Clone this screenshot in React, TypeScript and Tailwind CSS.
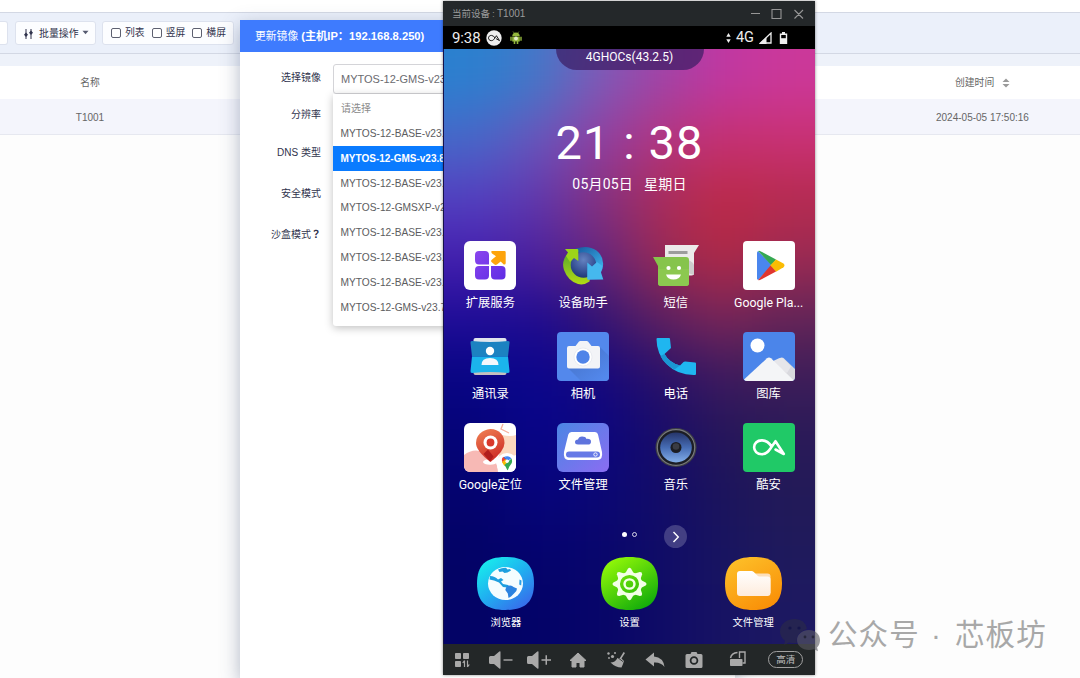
import type { ReactNode } from "react";

const versions = [
  "MYTOS-12-BASE-v23.8.2",
  "MYTOS-12-GMS-v23.8.15",
  "MYTOS-12-BASE-v23.8.1",
  "MYTOS-12-GMSXP-v23.7",
  "MYTOS-12-BASE-v23.7.8",
  "MYTOS-12-BASE-v23.7.5",
  "MYTOS-12-BASE-v23.7.1",
  "MYTOS-12-GMS-v23.7.1",
];

function Checkbox({ label }: { label: string }) {
  return (
    <label className="flex w-[41px] items-center gap-[4px]">
      <span className="size-[10px] rounded-[2px] border border-[#5d6070] bg-white" />
      <span className="text-[9.8px] leading-3 text-[#30334d]">{label}</span>
    </label>
  );
}

function Page() {
  return (
    <div className="flex h-full flex-col bg-[#fdfdfd] text-[#666]">
      <div className="h-[12px] bg-white" />
      <div className="flex h-[42px] items-start border-y border-[#d3d8e4] bg-[#ebf0fa] pt-[8px]">
        <div className="h-[24px] w-[8px] rounded-r-[3px] border border-l-0 border-[#dde2ee] bg-white" />
        <div className="ml-[7px] flex h-[24px] w-[81px] items-center rounded-[3px] border border-[#dde2ee] bg-[#fcfdff] pl-[7px] pt-[1px]">
          <svg width="11" height="12" viewBox="0 0 11 12" fill="#30334d">
            <path d="M2.500 1h1v10h-1zM7.500 1h1v10h-1z" />
            <path d="M3 4.500 5 6.700 3 9 1 6.700zM8 2.500 10 4.700 8 7 6 4.700z" />
          </svg>
          <span className="ml-[5px] text-[9.9px] leading-3 text-[#30334d]">批量操作</span>
          <svg className="ml-[3px] mb-[2px]" width="7" height="5" viewBox="0 0 7 5">
            <path d="M.5.8h6L3.500 4.300z" fill="#555a70" />
          </svg>
        </div>
        <div className="ml-[6px] flex h-[24px] w-[132px] items-center rounded-[3px] border border-[#dde2ee] bg-[#fcfdff] pl-[8px]">
          <Checkbox label="列表" />
          <Checkbox label="竖屏" />
          <Checkbox label="横屏" />
        </div>
      </div>
      <div className="h-[12px] bg-[#eef2fa]" />
      <div className="flex h-[33px] items-center justify-between bg-white text-[9.8px]">
        <span className="w-[180px] pt-px text-center">名称</span>
        <span className="flex w-[125px] items-center pt-px">
          创建时间
          <svg className="ml-[8px]" width="8" height="10" viewBox="0 0 8 10" fill="#9a9a9a">
            <path d="M4 .5 7.500 4H.5zM4 9.500 7.500 6H.5z" />
          </svg>
        </span>
      </div>
      <div className="flex h-[36px] items-center justify-between border-b border-[#e6e8f0] bg-[#f4f5fc] text-[10px]">
        <span className="w-[180px] pt-px text-center">T1001</span>
        <span className="w-[144px] pt-px">2024-05-05 17:50:16</span>
      </div>
    </div>
  );
}

function Dialog() {
  return (
    <div className="absolute left-[240px] top-[20px] flex h-[658px] w-[495px] flex-col bg-white shadow-[0_6px_18px_rgba(70,85,120,0.42)]">
      <div className="flex h-[32px] shrink-0 items-center bg-[#3e7bfe] pl-[15px] pt-px text-[10.8px] text-white">
        更新镜像&nbsp;<b className="text-[11.2px]">(主机IP：192.168.8.250)</b>
      </div>
      <div className="flex">
        <div className="flex w-[81px] flex-col items-end text-[10px] leading-[14px] text-[#30334d]">
          <span className="mt-[19px]">选择镜像</span>
          <span className="mt-[23px]">分辨率</span>
          <span className="mt-[24px]">DNS 类型</span>
          <span className="mt-[27px]">安全模式</span>
          <span className="mt-[26px]">沙盒模式<b className="font-['Noto_Sans_CJK_TC',sans-serif]">？</b></span>
        </div>
        <div className="ml-[12px] mt-[12px] w-[207px]">
          <div className="flex h-[30px] items-center rounded-[3px] border border-[#d4d4d8] pl-[7px] text-[11px] text-[#6b6b70]">
            MYTOS-12-GMS-v23.8.15
          </div>
          <div className="h-[232px] rounded-b-[3px] bg-white pt-[2.5px] text-[10.2px] text-[#5c5c60] shadow-[0_2px_8px_rgba(0,0,0,0.25)]">
            <div className="flex h-[24.8px] items-center pl-[8px] text-[10px] text-[#8a8a8a]">请选择</div>
            {versions.map((v, i) => (
              <div
                key={v}
                className={
                  i === 1
                    ? "flex h-[24.8px] items-center bg-[#0a7bff] pl-[7.5px] text-[10px] font-bold text-white"
                    : "flex h-[24.8px] items-center pl-[7.5px]"
                }
              >
                {v}
              </div>
            ))}
          </div>
        </div>
      </div>
    </div>
  );
}

const TileBox = ({ children }: { children: ReactNode }) => (
  <svg width="52" height="49" viewBox="0 0 52 49">
    {children}
  </svg>
);

const ExtendIcon = () => (
  <TileBox>
    <defs>
      <linearGradient id="ext" x1="0" y1="0" x2="1" y2="1">
        <stop offset="0" stopColor="#8a45ee" />
        <stop offset="1" stopColor="#5f2ce4" />
      </linearGradient>
    </defs>
    <rect width="52" height="49" rx="6" fill="#fff" />
    <path d="M15 10h6q4 0 4 4v9.500H15q-4 0-4-4.500v-5q0-4 4-4zM11 29q0-4 4-4h10v9.500q0 4-4 4h-6q-4 0-4-4zM27 25h10.500q4 0 4 4v5.500q0 4-4 4H31q-4 0-4-4z" fill="url(#ext)" />
    <path d="M28 10h12.500q1.200 0 1.200 1.200V22q0 1.500-1.300 1.500-.7 0-1.200-.6L36.700 20.500 33 23.500q-1.500.8-2.500 0L27.500 21q-.8-1 0-2l4.500-3.800-4-2.800Q26.500 10.300 28 10z" fill="#fda40c" />
  </TileBox>
);

const AssistantIcon = () => (
  <TileBox>
    <defs>
      <radialGradient id="orb" cx=".5" cy=".3" r=".7">
        <stop offset="0" stopColor="#6482c0" />
        <stop offset=".6" stopColor="#3a5599" />
        <stop offset="1" stopColor="#1f3876" />
      </radialGradient>
      <linearGradient id="gr" x1="0" y1="0" x2="0" y2="1">
        <stop offset="0" stopColor="#5aa82c" />
        <stop offset="1" stopColor="#b2dc14" />
      </linearGradient>
      <linearGradient id="bl" x1="0" y1="0" x2=".8" y2="1">
        <stop offset="0" stopColor="#175a9e" />
        <stop offset="1" stopColor="#3db2ec" />
      </linearGradient>
    </defs>
    <path d="M19 7.500Q31 3.500 39.500 9.500 47 15.500 46 24.500q0 4-2.500 7L35 29 22 12z" fill="url(#bl)" />
    <path d="M11 12Q4 20 7 29q4 11 14 14 6 1.500 11.500-2.500L33 37 18 16z" fill="url(#gr)" />
    <circle cx="26.500" cy="24" r="12.800" fill="url(#orb)" />
    <path d="M8 8 20.500 8q.8.300.8 1V20L17 17l-4 4-4-6 2-3.500z" fill="#9cd51a" />
    <path d="M30.300 21.500 35 25.500 40 21l5.500 4-1.500 6.500 2.300 7L31 38.800q-.8-.3-.8-1z" fill="#45b8ee" />
  </TileBox>
);

const SmsIcon = () => (
  <TileBox>
    <path d="M15 4h34l-5 8v20q0 2.500-2.500 2.500H18Q15 34.500 15 32z" fill="#eceaea" />
    <rect x="18.500" y="10" width="19" height="3" fill="#9c9c9c" />
    <path d="M38 19q5 2 6 5v10l-6-2z" fill="#cdcdcd" />
    <path d="M3 16h33q3 0 3 3v23q0 3-3 3H11q-3 0-3-3V25z" fill="#86c44c" />
    <path d="M8 28h31v14q0 3-3 3H11q-3 0-3-3z" fill="#8cc850" />
    <circle cx="18.500" cy="27" r="2.100" fill="#fff" />
    <circle cx="29" cy="27" r="2.100" fill="#fff" />
    <path d="M16 33.500h15q-1.500 5-7.500 5t-7.500-5z" fill="#fff" />
  </TileBox>
);

const PlayIcon = () => (
  <TileBox>
    <rect width="52" height="49" rx="4" fill="#fff" />
    <path d="M14 11.500v26q.3 1 1.200 1.500L29 24.500 15.200 10q-1 .5-1.200 1.500z" fill="#4a86ee" />
    <path d="M15.200 10q1-.5 2.300.2L33 18.500l-4.500 6z" fill="#35a853" />
    <path d="M33 18.500 40.500 22.500q2 1.800 0 3.800L33 30.800 27 24.500z" fill="#fbbc04" />
    <path d="M15.200 39q1 .5 2.300-.2L33 30.500l-5.500-6z" fill="#e0362f" />
  </TileBox>
);

const ContactsIcon = () => (
  <TileBox>
    <rect x="9.500" y="6" width="33" height="6" rx="2" fill="#dfe4ec" />
    <rect x="9.500" y="37" width="33" height="6" rx="2" fill="#c5c0be" />
    <path d="M8 9q18 2 36 0 2 0 1.500 2L44 24.500H8L6.500 11Q6 9 8 9z" fill="#1c82c1" />
    <path d="M8 24.500h36L45.500 39q.2 2-1.500 2-18-2-36 0-1.700 0-1.500-2z" fill="#1bb4ec" />
    <circle cx="26" cy="19" r="4.200" fill="#fff" />
    <path d="M17.500 33q0-7 8.500-7t8.500 7z" fill="#f2f8fc" />
  </TileBox>
);

const CameraIcon = () => (
  <TileBox>
    <defs>
      <linearGradient id="cam" x1="0" y1="0" x2="1" y2="1">
        <stop offset=".2" stopColor="#4776cf" />
        <stop offset=".9" stopColor="#5388ec" />
      </linearGradient>
    </defs>
    <rect width="52" height="49" rx="4" fill="#5388ec" />
    <path d="M11 36 43 15l9 9v21q0 4-4 4H24z" fill="url(#cam)" />
    <path d="M12 14h6.500l3.500-4.500q.5-.5 1.300-.5h6.400q.8 0 1.300.5l3.500 4.500H41q2 0 2 2v18.500q0 2-2 2H12q-2 0-2-2V16q0-2 2-2z" fill="#f3f4f7" />
    <circle cx="26" cy="25" r="9" fill="#fff" stroke="#dfe2ea" strokeWidth=".6" />
    <circle cx="26" cy="25" r="6.700" fill="#4f84e8" />
  </TileBox>
);

const PhoneIcon = () => (
  <TileBox>
    <path d="M7.500 6H19q1 0 1 1l1 9-6.500 6q5 9 15.500 11.500l3.500-3.500q.7-.7 1.700-.6L45 30.500q1 .1 1 1V42q0 1-1 1Q28 43.500 17 32.500 6.500 22 6.500 7q0-1 1-1z" fill="#1fb6f0" />
    <path d="M14.500 22q5 9 15.500 11.500l-5.500 4Q14 32 10.500 24z" fill="#1b96d2" />
  </TileBox>
);

const GalleryIcon = () => (
  <TileBox>
    <rect width="52" height="49" rx="4" fill="#4b85ea" />
    <circle cx="14.500" cy="13.500" r="7" fill="#fff" />
    <path d="M28 34 37.500 26q1.500-1 3 0L52 37v8q0 4-4 4H30z" fill="#d9d9de" />
    <path d="M28 30 36 26.300q2.500-1.300 4.500.5L48 34.500 44 41z" fill="#e6e6ea" />
    <path d="M1 47.500 24 26.300q2-1.500 4 0L50.500 48.200q-1 .8-2.500.8H4q-2 0-3-1.500z" fill="#f4f5f7" />
  </TileBox>
);

const LocateIcon = () => (
  <TileBox>
    <defs>
      <clipPath id="loc"><rect width="52" height="49" rx="6" /></clipPath>
      <linearGradient id="pin" x1="0" y1="0" x2=".4" y2="1">
        <stop offset="0" stopColor="#f08254" />
        <stop offset="1" stopColor="#cf2f28" />
      </linearGradient>
    </defs>
    <g clipPath="url(#loc)">
      <rect width="52" height="49" fill="#fff" />
      <path d="M0 32Q10 24 22 30q12 6 12 19H0z" fill="#f7b9b5" />
      <path d="M38 12q9 2 14 0v20l-18 6z" fill="#fbd8bf" />
      <path d="M39 1l-2 5 8 4" stroke="#f6b09c" strokeWidth="1.300" fill="none" />
      <ellipse cx="26" cy="39" rx="7" ry="2.800" fill="#fff" />
      <path d="M26.500 6q6.500 0 10.500 4.500 3.500 4 3.500 9.500 0 8-14 19-14.500-11-14.500-19 0-5.500 4-9.500T26.500 6z" fill="url(#pin)" />
      <path d="M19.500 31 24 26.500l5.500 7-3.500 5z" fill="#b01c1c" />
      <circle cx="26.500" cy="19.500" r="7" fill="#fff" />
      <circle cx="26.500" cy="19.500" r="3.900" fill="#d9382c" />
      <circle cx="43" cy="40.500" r="10.500" fill="#fff" />
      <path d="M38 38a5.200 5.200 0 0 1 3-4.400l2.200 4z" fill="#1a73e8" />
      <path d="M41 33.600q4-1.500 6.500 2L43 38z" fill="#4285f4" />
      <path d="M37.800 37q0-2 1.500-3.300l2.700 3-3.500 3z" fill="#ea4335" />
      <path d="M38 39l4-3 1.300 3-3 4z" fill="#fbbc04" />
      <path d="M47.500 35.600q1.500 3.500-.7 6-2 2.400-2.700 5-.5 1.400-1.100 0-.5-2-2.600-4.600z" fill="#34a853" />
      <circle cx="43.100" cy="38.200" r="1.700" fill="#fff" />
    </g>
  </TileBox>
);

const DriveIcon = () => (
  <TileBox>
    <defs>
      <linearGradient id="drv" x1="0" y1="0" x2="1" y2="1">
        <stop offset="0" stopColor="#4b86e4" />
        <stop offset="1" stopColor="#8b6cf2" />
      </linearGradient>
    </defs>
    <rect width="52" height="49" rx="6" fill="url(#drv)" />
    <path d="M14.500 9h23.500q2.500 0 3 2.500L45 29q1 7-4 8H11q-5-1-4-8l4.300-17.500Q12 9 14.500 9z" fill="#fff" />
    <rect x="9" y="28.500" width="34" height="6" rx="3" fill="#6679e6" />
    <circle cx="38.500" cy="31.500" r="1.700" fill="#6679e6" stroke="#fff" strokeWidth=".9" />
    <path d="M21 21.500q-3 0-3-2.500t3-2.600q.8-2.900 4-2.900 3.600 0 4.500 2.400 4.500-.4 4.500 2.800 0 2.800-3 2.800z" fill="#5f74dd" />
  </TileBox>
);

const MusicIcon = () => (
  <TileBox>
    <defs>
      <linearGradient id="spk" x1="0" y1="0" x2="0" y2="1">
        <stop offset="0" stopColor="#26356a" />
        <stop offset=".5" stopColor="#466cb4" />
        <stop offset="1" stopColor="#83aee8" />
      </linearGradient>
    </defs>
    <ellipse cx="26" cy="24.500" rx="20.500" ry="19.500" fill="#3e4044" />
    <ellipse cx="26" cy="24.500" rx="18.700" ry="17.800" fill="#1b1d24" stroke="#77787d" strokeWidth="1.200" />
    <ellipse cx="26" cy="24.500" rx="15.800" ry="15" fill="url(#spk)" />
    <circle cx="26" cy="24.500" r="5.500" fill="#1c1d22" />
    <circle cx="26" cy="23.500" r="3.300" fill="#3a3c44" />
  </TileBox>
);

const CoolapkMark = ({ color }: { color: string }) => (
  <path
    d="M28.500 23.500Q25 17.700 19 17.400C8.500 17.200 8.500 31.300 19 31.200 24 31 26 27.500 28.500 24L32.500 18.200 40.800 31 32.500 26.500"
    fill="none"
    stroke={color}
    strokeWidth="2.600"
    strokeLinecap="round"
    strokeLinejoin="round"
  />
);

const CoolapkIcon = () => (
  <TileBox>
    <rect width="52" height="49" rx="4" fill="#20c967" />
    <CoolapkMark color="#fff" />
  </TileBox>
);

const apps: { name: string; icon: ReactNode }[] = [
  { name: "扩展服务", icon: <ExtendIcon /> },
  { name: "设备助手", icon: <AssistantIcon /> },
  { name: "短信", icon: <SmsIcon /> },
  { name: "Google Pla...", icon: <PlayIcon /> },
  { name: "通讯录", icon: <ContactsIcon /> },
  { name: "相机", icon: <CameraIcon /> },
  { name: "电话", icon: <PhoneIcon /> },
  { name: "图库", icon: <GalleryIcon /> },
  { name: "Google定位", icon: <LocateIcon /> },
  { name: "文件管理", icon: <DriveIcon /> },
  { name: "音乐", icon: <MusicIcon /> },
  { name: "酷安", icon: <CoolapkIcon /> },
];

const SQUIRCLE = "M28.500 0C48 0 57 8 57 26.500S48 53 28.500 53 0 45 0 26.500 9 0 28.500 0z";

const BrowserIcon = () => (
  <svg width="57" height="53" viewBox="0 0 57 53">
    <defs>
      <linearGradient id="brw" x1=".1" y1="0" x2=".9" y2="1">
        <stop offset="0" stopColor="#17f3ec" />
        <stop offset=".5" stopColor="#20aef0" />
        <stop offset="1" stopColor="#3b62ea" />
      </linearGradient>
    </defs>
    <path d={SQUIRCLE} fill="url(#brw)" />
    <ellipse cx="28.500" cy="26.500" rx="17.500" ry="16.500" fill="#f4fdff" />
    <path d="M21 12.500q4-2 8-1.800l1.500 1.800 2.500-.5 1 1.500-3.500 2-3 .5-2-1.500-3 .5z" fill="#1d9fdf" />
    <path d="M13 19q5 0 8 3.500l3-1.500 2.500 2-2.500 1.500 2 2.500 5 1 1.500 1.500-2.500 1-4-.5-4-4.500-5-2-4.500-1z" fill="#1d9fdf" />
    <path d="M30.500 29q4-1.500 6 1l3.500 1.500q0 3-3 5l-3 3-2.500 1.500-.7-4.500-2.500-3.500q.5-3 2.200-4z" fill="#2a83e0" />
    <path d="M42.500 22.500l2 1-.3 5-2-1z" fill="#2aa0e8" />
  </svg>
);

const SettingsIcon = () => (
  <svg width="57" height="53" viewBox="0 0 57 53">
    <defs>
      <linearGradient id="set" x1=".15" y1="0" x2=".85" y2="1">
        <stop offset="0" stopColor="#98fb08" />
        <stop offset="1" stopColor="#0aa70b" />
      </linearGradient>
    </defs>
    <path d={SQUIRCLE} fill="url(#set)" />
    <g transform="translate(28.500 27) scale(1.080 1.020)">
      {[0, 45, 90, 135, 180, 225, 270, 315].map((a) => (
        <path key={a} d="M-4.200-10-1.500-15q1.500-1.700 3 0L4.200-10z" fill="#f3ffe8" transform={`rotate(${a})`} />
      ))}
      <circle r="10.300" fill="none" stroke="#f3ffe8" strokeWidth="2.900" />
      <circle r="4.600" fill="none" stroke="#f3ffe8" strokeWidth="2.300" />
    </g>
  </svg>
);

const FolderIcon = () => (
  <svg width="57" height="53" viewBox="0 0 57 53">
    <defs>
      <linearGradient id="fld" x1=".2" y1="0" x2=".8" y2="1">
        <stop offset="0" stopColor="#fdbf28" />
        <stop offset="1" stopColor="#f98d06" />
      </linearGradient>
      <linearGradient id="fl2" x1="0" y1="0" x2="0" y2="1">
        <stop offset="0" stopColor="#fff" />
        <stop offset="1" stopColor="#feecdc" />
      </linearGradient>
    </defs>
    <path d={SQUIRCLE} fill="url(#fld)" />
    <path d="M28 16.500h14.500q3 0 3 3V36H28z" fill="#fde0bb" />
    <path d="M15 14h11.500q1.300 0 2.300 1l3.500 3.500q.8 1 2.200 1h8q3 0 3 3V36q0 3-3 3H15q-3 0-3-3V17q0-3 3-3z" fill="url(#fl2)" />
  </svg>
);

const dock: { name: string; icon: ReactNode }[] = [
  { name: "浏览器", icon: <BrowserIcon /> },
  { name: "设置", icon: <SettingsIcon /> },
  { name: "文件管理", icon: <FolderIcon /> },
];

const SPEAKER = "M-1 8.500Q-1 7 .5 7H4l5.300-4.500q1.200-.8 1.200.5v16q0 1.300-1.200.5L4 15H.5Q-1 15-1 13.500z";

const navIcons: ReactNode[] = [
  <g key="grid">
    <path d="M4.500 4.500h5v5h-5zM12.500 4.500h5v5h-5zM4.500 12.500h5v5h-5z" stroke="#a9a9a9" strokeLinejoin="round" />
    <path d="M13.500 11.500v6.500M11.700 14l1.800-2.300M16.500 11.500v6.500M18.300 15.500l-1.800 2.300" fill="none" stroke="#a9a9a9" strokeWidth="1.200" />
  </g>,
  <g key="down">
    <path d={SPEAKER} />
    <path d="M13.500 10.300h9v1.400h-9z" />
  </g>,
  <g key="up">
    <path d={SPEAKER} />
    <path d="M13.500 10.300h4v-4H19v4h4v1.400h-4v4h-1.500v-4h-4z" />
  </g>,
  <path key="home" d="M11 4 19 11.500h-2V18h-4v-4.500H9V18H5v-6.500H3z" stroke="#a9a9a9" strokeLinejoin="round" />,
  <g key="clean">
    <path d="M19 4 15.500 9.500l2.500 2.500Q17 15.500 15.500 18.500 9.500 18.500 4.500 13.500q4.500 0 7-4.500l2.200.3L17.600 3z" />
    <path d="M12 8.800 17.200 12.800" stroke="#222627" strokeWidth=".8" />
    <circle cx="2.500" cy="4.500" r="1.200" /><circle cx="6.500" cy="7.500" r="1.600" /><circle cx="9" cy="4" r="1" /><circle cx="3" cy="9" r=".9" />
  </g>,
  <path key="back" d="M10 3.500v4q9.500 1 10.500 10.500-3.500-5-10.500-4.500v4L1.500 10.500z" />,
  <g key="shot">
    <path d="M4 5h3.500l1-2h5l1 2H18q1.500 0 1.500 1.500v11Q19.500 19 18 19H4q-1.500 0-1.500-1.500v-11Q2.500 5 4 5z" />
    <circle cx="11" cy="11.500" r="3.400" fill="none" stroke="#232728" strokeWidth="1.800" />
  </g>,
  <g key="rotate">
    <rect x="3" y="10" width="12.500" height="7" rx=".8" />
    <path d="M12.500 9V3h5.500v11h-2.500M3.500 9Q4.500 4 10.500 3.500" fill="none" stroke="#a9a9a9" strokeWidth="1.400" />
  </g>,
];

/* Wallpaper colour mesh, left to right and top to bottom. */
const MESH = [
  ["#2b80cf", "#4378c8", "#7d5bb8", "#a044a8", "#c137a2", "#cb389a"],
  ["#4768c8", "#6a55bc", "#903fa2", "#b33580", "#c53172", "#c93174"],
  ["#5440c0", "#6038ae", "#86317f", "#a92c5c", "#bd2a48", "#b62b50"],
  ["#441fae", "#4c209c", "#64267e", "#982a54", "#b02946", "#9c2a52"],
  ["#200d98", "#200c90", "#351572", "#5e2160", "#7a2658", "#642558"],
  ["#080584", "#0b068e", "#15087e", "#28116a", "#3d1a5e", "#3d1d59"],
  ["#050478", "#080588", "#0b067f", "#180c69", "#251659", "#2a1a58"],
  ["#04036e", "#06047c", "#0a0775", "#120c68", "#1b145c", "#221a58"],
  ["#030366", "#04036e", "#08066c", "#100c67", "#181460", "#1f1a5c"],
  ["#030366", "#030368", "#070569", "#0f0b66", "#171363", "#1d1962"],
];

function Wallpaper() {
  return (
    <svg className="absolute inset-0" width="372" height="595" viewBox="0 0 372 595">
      <defs>
        <filter
          id="soft"
          filterUnits="userSpaceOnUse"
          x="-130"
          y="-130"
          width="632"
          height="855"
          colorInterpolationFilters="sRGB"
        >
          <feGaussianBlur stdDeviation="27" />
        </filter>
      </defs>
      <g filter="url(#soft)">
        {MESH.map((row, r) =>
          row.map((fill, c) => (
            <rect
              key={`${r}-${c}`}
              x={c === 0 ? -100 : c * 62}
              y={r === 0 ? -100 : r * 59.5}
              width={c === 0 ? 163 : c === 5 ? 162 : 63}
              height={r === 0 ? 160.5 : r === 9 ? 160 : 60.5}
              fill={fill}
            />
          )),
        )}
      </g>
    </svg>
  );
}

function StatusBar() {
  return (
    <div className="flex h-[23px] shrink-0 items-center bg-black pl-[9px] pr-[27px] text-[#eee]">
      <span className="pt-px text-[15px] leading-4 tracking-[-0.1px]">9:38</span>
      <svg className="ml-[5px]" width="16" height="16" viewBox="0 0 16 16">
        <circle cx="8" cy="8" r="7.700" fill="#eee" />
        <g transform="translate(-1.600 -1.200) scale(.37 .38)"><CoolapkMark color="#111" /></g>
      </svg>
      <svg className="ml-[8px]" width="12" height="14" viewBox="0 0 12 14" fill="#94b83c">
        <path d="M2.200 5.200Q2.400 1.700 6 1.500q3.600.2 3.800 3.700zM2.200 5.700h7.600v4.800H8.300V13H6.700v-2.500H5.300V13H3.700v-2.500H2.200z" />
        <path d="M.3 5.800h1.400v4H.3zM10.300 5.800h1.400v4h-1.400z" />
        <path d="M3 .5 4.200 2M9 .5 7.800 2" stroke="#94b83c" strokeWidth=".6" />
        <circle cx="6" cy="7.500" r="1.900" fill="#e4edcb" />
      </svg>
      <div className="grow" />
      <svg width="5" height="10" viewBox="0 0 5 10" fill="#eee"><path d="M2.500 0 4.700 3.700H.3zM2.500 10 4.700 6.300H.3z" /></svg>
      <span className="ml-[5px] pt-px text-[14.5px] leading-4">4G</span>
      <svg className="ml-[5px]" width="13" height="12" viewBox="0 0 13 12">
        <path d="M12 1v10H1.500z" fill="none" stroke="#eee" strokeWidth="1.300" />
        <path d="M0 12 7.500 5v7z" fill="#eee" />
      </svg>
      <svg className="ml-[7px]" width="9" height="12" viewBox="0 0 9 12">
        <path d="M3 0h3v1.500h2.200V12H.8V1.500H3z" fill="#eee" />
        <path d="M2.200 3h4.600v3.200H2.200z" fill="#000" />
      </svg>
    </div>
  );
}

function DeviceWindow() {
  return (
    <div className="absolute left-[443px] top-px flex h-[674px] w-[372px] flex-col overflow-hidden bg-[#232728] font-[Roboto,'Noto_Sans_CJK_SC',sans-serif] shadow-[0_0_3px_rgba(0,0,0,0.45)]">
      <div className="flex h-[25px] shrink-0 items-center bg-[#24282a] pl-[9px] pr-[11px] text-[9.5px] text-[#9b9b9b]">
        <span className="pt-px">当前设备 : <span className="font-['Liberation_Sans',sans-serif] text-[10px]">T1001</span></span>
        <div className="grow" />
        <svg width="54" height="12" viewBox="0 0 54 12" fill="none" stroke="#969696" strokeWidth="1.100">
          <path d="M1 5.500h9M22 1.500h9v9h-9zM44.500 2l8.500 8.500M53 2 44.500 10.500" />
        </svg>
      </div>
      <StatusBar />
      <div className="relative h-[595px] shrink-0 border-l border-[#15104a] bg-[#0a0670] text-white">
        <Wallpaper />
        <div className="relative flex flex-col items-center">
          <div className="flex h-[21px] w-[148px] shrink-0 justify-center rounded-b-[22px] bg-[#3b1b62]/70 text-[12px] leading-4">
            4GHOCs(43.2.5)
          </div>
          <div className="mt-[45px] text-[47px] leading-[56px] tracking-[1.1px] whitespace-pre">21 : 38</div>
          <div className="mt-[4px] text-[14px] leading-[18px] tracking-[0.2px] whitespace-pre">05月05日   星期日</div>
          <div className="mt-[48px] grid w-full grid-cols-4">
            {apps.map((a) => (
              <div key={a.name} className="flex h-[91px] flex-col items-center">
                {a.icon}
                <span className="mt-[4px] text-[12.3px] leading-[18px] whitespace-nowrap">{a.name}</span>
              </div>
            ))}
          </div>
          <div className="mt-[11px] flex h-[23px] w-full items-center pl-[178px]">
            <span className="mb-[4px] size-[5px] rounded-full bg-white" />
            <span className="mb-[4px] ml-[5px] size-[5px] rounded-full border border-white/80" />
            <span className="ml-[27px] flex size-[23px] items-center justify-center rounded-full bg-white/20">
              <svg width="8" height="12" viewBox="0 0 8 12"><path d="M1.500 1 6.300 6 1.500 11" fill="none" stroke="#fff" strokeWidth="1.400" /></svg>
            </span>
          </div>
          <div className="mt-[9px] grid w-full grid-cols-3">
            {dock.map((d) => (
              <div key={d.name} className="flex flex-col items-center">
                {d.icon}
                <span className="mt-[5px] text-[10.3px] leading-[16px]">{d.name}</span>
              </div>
            ))}
          </div>
        </div>
      </div>
      <div className="flex h-[31px] items-center">
        {navIcons.map((icon, i) => (
          <div key={i} className={i === 7 ? "flex w-[50px] justify-center" : "flex w-[38.6px] justify-center"}>
            <svg className="overflow-visible" width="22" height="22" viewBox="0 0 22 22" fill="#a9a9a9">{icon}</svg>
          </div>
        ))}
        <div className="flex w-[45px] justify-center">
          <span className="flex h-[17px] w-[35px] items-center justify-center rounded-full border border-[#a0a0a0] text-[9.5px] leading-3 text-[#bdbdbd]">高清</span>
        </div>
      </div>
    </div>
  );
}

function Watermark() {
  return (
    <div className="absolute left-[779px] top-[615px] flex h-[40px] items-center text-[29.5px] leading-[40px] tracking-[1.1px] text-[#a8a8a8]">
      <svg width="43" height="36" viewBox="0 0 43 36">
        <path d="M16 2C7 2 1 7.500 1 14.500c0 4 2 7 5 9.300L5 28l5-2.500q4 1 8 .5-2-10 10-14Q26 2 16 2z" fill="#2c2c46" fillOpacity=".6" />
        <path d="M30 13c-7 0-12 4.500-12 10s5 10 12 10q2.500 0 5-.8l4 2-1-3.700q3-3 3-7.500c0-5.500-4.500-10-11-10z" fill="#5a5a60" fillOpacity=".6" />
        <circle cx="11" cy="11" r="1.600" fill="#15154a" /><circle cx="20" cy="11" r="1.600" fill="#15154a" />
        <circle cx="26" cy="20" r="1.400" fill="#26263a" /><circle cx="34" cy="20" r="1.400" fill="#26263a" />
      </svg>
      <span className="ml-[6px] w-[93px]">公众号</span>
      <span className="w-[34px] pr-[3px] text-center">·</span>
      <span>芯板坊</span>
    </div>
  );
}

export default function App() {
  return (
    <div className="relative h-[678px] w-[1080px] overflow-hidden bg-white font-['Liberation_Sans','Noto_Sans_CJK_SC',sans-serif]">
      <Page />
      <Dialog />
      <DeviceWindow />
      <Watermark />
    </div>
  );
}
